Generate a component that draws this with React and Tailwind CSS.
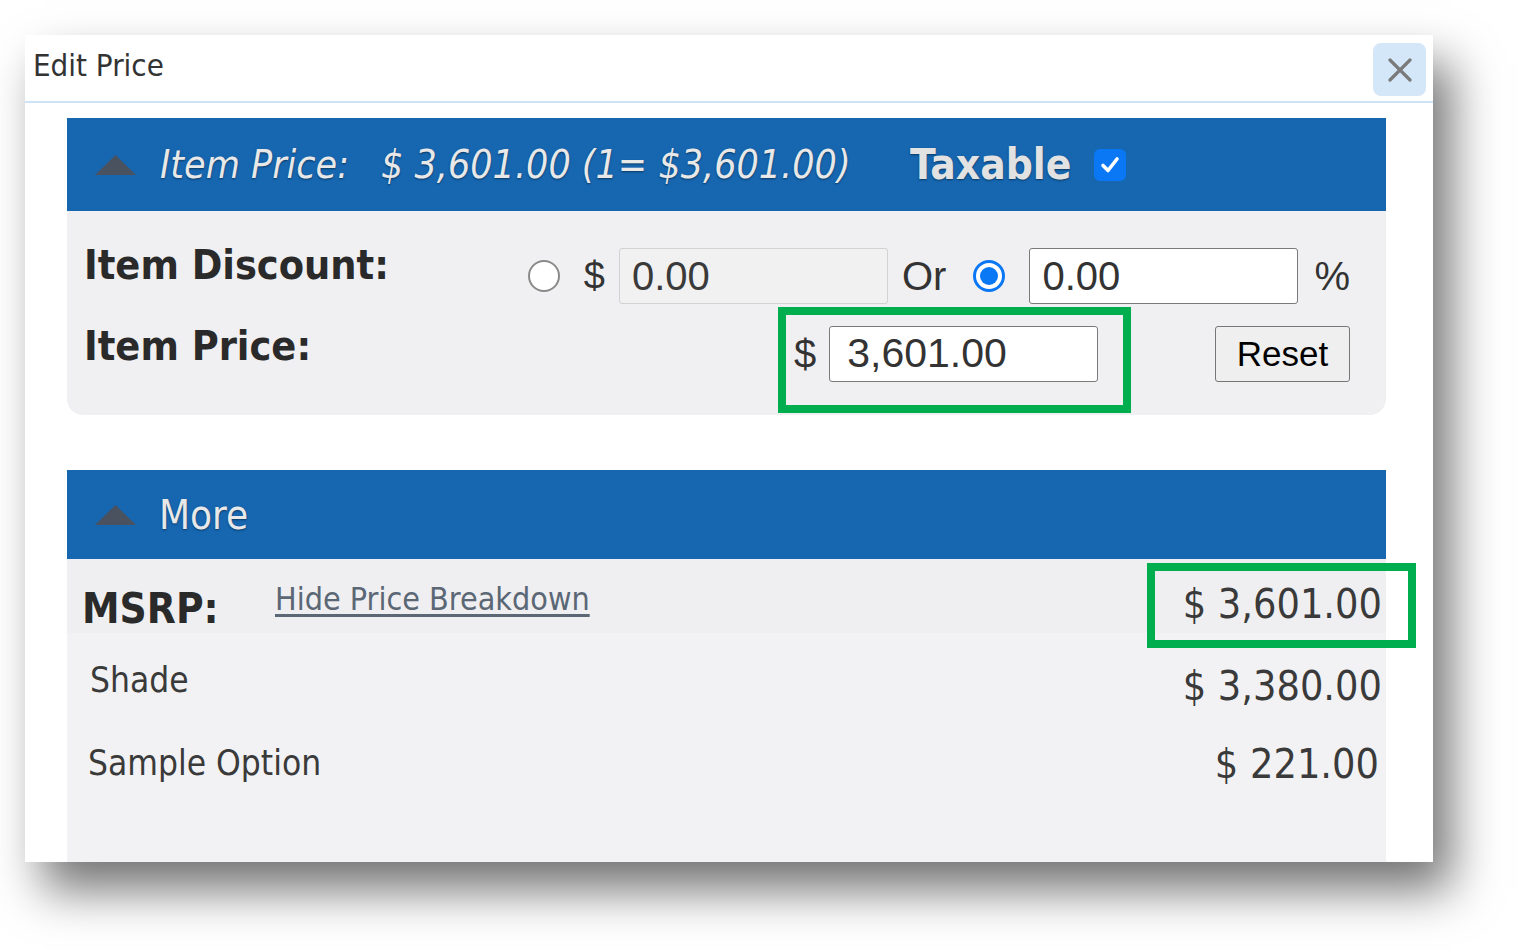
import React from "react";

const tah = "font-['DejaVu_Sans_Condensed','DejaVu_Sans',sans-serif]";
const ari = "font-['Liberation_Sans',Arial,sans-serif]";

function Triangle() {
  return (
    <svg width="41" height="20" viewBox="0 0 41 20" className="shrink-0">
      <polygon points="20.5,0 41,20 0,20" fill="#4a5260" />
    </svg>
  );
}

function Radio({ checked }) {
  if (checked) {
    return (
      <div className="w-[32px] h-[32px] rounded-full border-[3px] border-[#0a78f5] bg-white flex items-center justify-center shrink-0">
        <div className="w-[18px] h-[18px] rounded-full bg-[#0a78f5]"></div>
      </div>
    );
  }
  return <div className="w-[32px] h-[32px] rounded-full border-2 border-[#8a8a8a] bg-white shrink-0"></div>;
}

export default function App() {
  return (
    <div className="w-full min-h-screen bg-white pt-[35px] pl-[25px]">
      <div className="w-[1408px] h-[827px] bg-white flex flex-col overflow-hidden shadow-[18px_28px_45px_rgba(0,0,0,0.55)]">
        {/* title bar */}
        <div className="h-[68px] shrink-0 flex items-start justify-between border-b-2 border-[#cfe3f6] pl-[8px] pr-[7px]">
          <div className={`${tah} text-[31px] leading-none text-[#333] mt-[15px]`}>Edit Price</div>
          <button className="mt-[8px] w-[53px] h-[53px] rounded-lg bg-[#d4e7f8] flex items-center justify-center">
            <svg width="24" height="24" viewBox="0 0 24 24">
              <path d="M2 2 L22 22 M22 2 L2 22" stroke="#7a7a7a" strokeWidth="3.2" strokeLinecap="round" />
            </svg>
          </button>
        </div>

        <div className="flex-1 flex flex-col pl-[42px] pr-[47px] pt-[15px] min-h-0">
          {/* item price header */}
          <div className="h-[93px] bg-[#1666b0] flex items-center pl-[28px] shrink-0">
            <Triangle />
            <div className={`${tah} italic text-[39px] leading-none text-[#e8e8e8] ml-[24px] w-[750px] whitespace-pre [text-shadow:0_1px_2px_rgba(0,0,0,0.45)]`}>
              Item Price:<span className="ml-[32px]">$ 3,601.00 (1= $3,601.00)</span>
            </div>
            <div className={`${tah} font-bold text-[42px] leading-none text-[#e2e2e2] [text-shadow:0_1px_2px_rgba(0,0,0,0.45)]`}>Taxable</div>
            <div className="ml-[23px] w-[32px] h-[32px] rounded-md bg-[#0a78f5] flex items-center justify-center">
              <svg width="22" height="22" viewBox="0 0 22 22">
                <path d="M4 11.5 L9 16.5 L18 5" stroke="white" strokeWidth="3.6" fill="none" strokeLinecap="round" strokeLinejoin="round" />
              </svg>
            </div>
          </div>

          {/* item price body */}
          <div className="bg-[#f0f0f2] rounded-b-2xl pl-[17px] pr-[36px] pt-[37px] pb-[2px] shrink-0">
            <div className="flex items-start h-[56px]">
              <div className={`${tah} font-bold text-[41px] leading-none text-[#2a2a2a] w-[448px] -mt-[3px]`}>Item Discount:</div>
              <div className="h-[56px] flex items-center">
                <Radio />
                <span className={`${ari} text-[38px] text-[#333] ml-[24px]`}>$</span>
                <input readOnly value="0.00" className={`${ari} ml-[14px] w-[269px] h-[56px] bg-[#f1f1f2] border border-[#d2d2d4] rounded-[3px] px-[12px] text-[40px] text-[#3a3a3a] outline-none`} />
                <span className={`${ari} text-[40px] text-[#333] ml-[14px]`}>Or</span>
                <div className="ml-[27px]">
                  <Radio checked />
                </div>
                <input readOnly value="0.00" className={`${ari} ml-[24px] w-[269px] h-[56px] bg-white border border-[#7a7a7a] rounded-[3px] px-[12px] text-[40px] text-[#333] outline-none`} />
                <span className={`${ari} text-[40px] text-[#333] ml-[16px]`}>%</span>
              </div>
            </div>
            <div className="flex items-start mt-[3px]">
              <div className={`${tah} font-bold text-[41px] leading-none text-[#2a2a2a] w-[694px] mt-[19px]`}>Item Price:</div>
              <div className="border-[8px] border-[#00ae4f] w-[353px] h-[106px] pl-[8px] pt-[11px] flex items-start">
                <span className={`${ari} text-[40px] leading-[56px] text-[#333]`}>$</span>
                <input readOnly value="3,601.00" className={`${ari} ml-[13px] w-[269px] h-[56px] bg-white border border-[#7a7a7a] rounded-[3px] px-[17px] text-[41px] text-[#333] outline-none`} />
              </div>
              <button className={`${ari} ml-auto mt-[19px] w-[135px] h-[56px] bg-[#efefef] border border-[#767676] rounded-[3px] text-[35px] text-black`}>Reset</button>
            </div>
          </div>

          {/* more header */}
          <div className="mt-[55px] h-[89px] bg-[#1666b0] flex items-center pl-[28px] shrink-0">
            <Triangle />
            <div className={`${tah} text-[40px] leading-none text-[#e8e8e8] ml-[23px] [text-shadow:0_1px_2px_rgba(0,0,0,0.45)]`}>More</div>
          </div>

          {/* more body */}
          <div className="flex-1 bg-[#f2f2f4]">
            <div className="relative h-[74px] bg-[#efeff1] flex items-start pl-[15px] pr-[4px]">
              <div className={`${tah} font-bold text-[42px] leading-none text-[#2a2a2a] mt-[29px] w-[193px]`}>MSRP:</div>
              <a className={`${tah} text-[32px] leading-none text-[#5b6775] underline underline-offset-4 mt-[24px]`}>Hide Price Breakdown</a>
              <div className={`${tah} text-[41px] leading-none text-[#3a3a3a] ml-auto mt-[25px]`}>$ 3,601.00</div>
              <div className="absolute left-[1080px] top-[4px] w-[269px] h-[85px] border-[8px] border-[#00ae4f]"></div>
            </div>
            <div className="h-[80px] flex items-start pl-[23px] pr-[4px]">
              <div className={`${tah} text-[35px] leading-none text-[#3a3a3a] mt-[30px]`}>Shade</div>
              <div className={`${tah} text-[41px] leading-none text-[#3a3a3a] ml-auto mt-[33px]`}>$ 3,380.00</div>
            </div>
            <div className="h-[80px] flex items-start pl-[21px] pr-[7px]">
              <div className={`${tah} text-[35px] leading-none text-[#3a3a3a] mt-[33px]`}>Sample Option</div>
              <div className={`${tah} text-[41px] leading-none text-[#3a3a3a] ml-auto mt-[31px]`}>$ 221.00</div>
            </div>
          </div>
        </div>
      </div>
    </div>
  );
}
